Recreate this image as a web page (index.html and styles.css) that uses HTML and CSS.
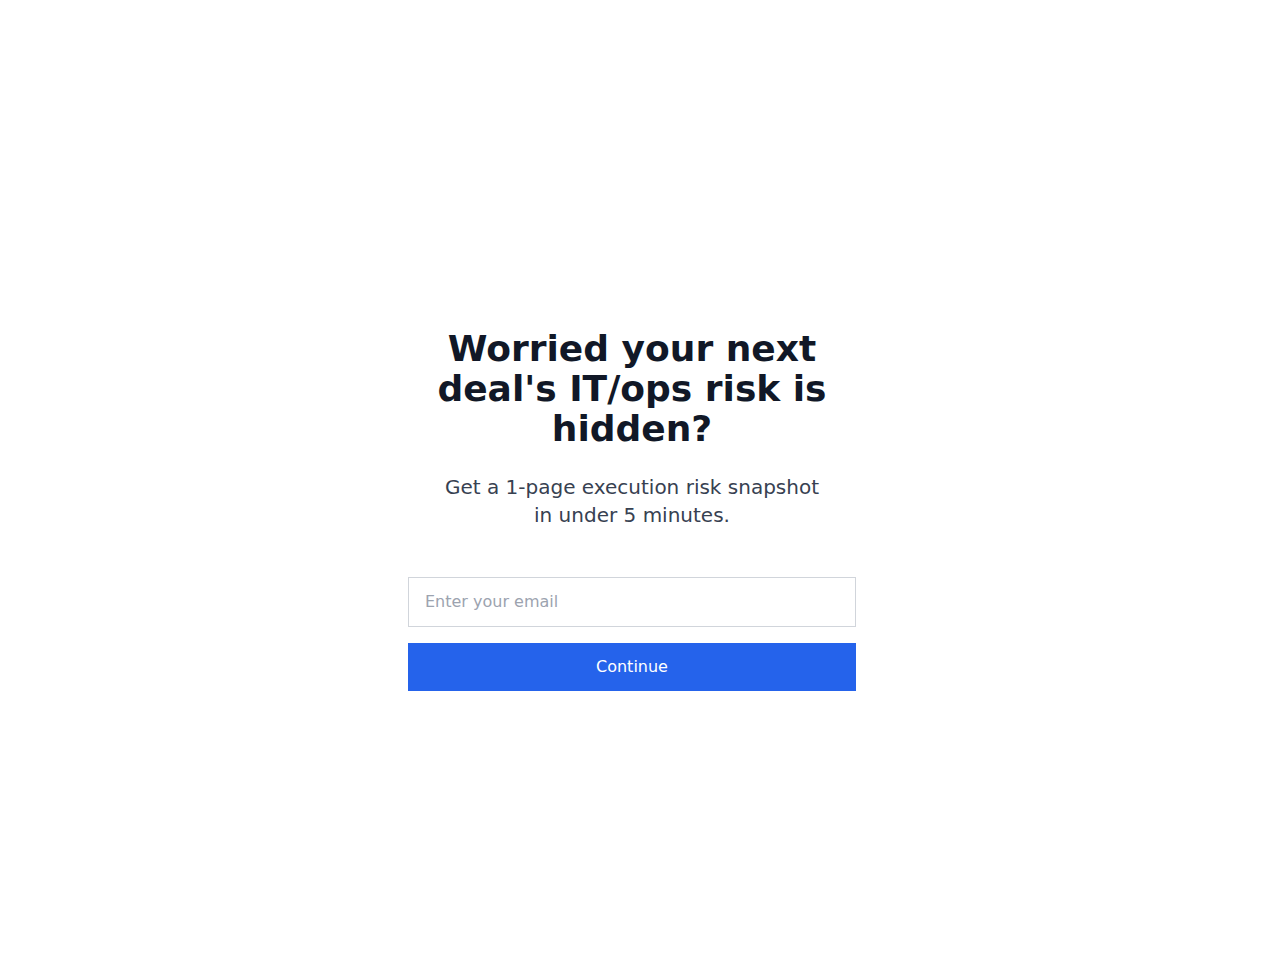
FILE: index.html
```html
<!DOCTYPE html>
<html lang="en">
<head>
<meta charset="utf-8">
<title>Execution risk snapshot</title>
<link rel="stylesheet" href="styles.css">
</head>
<body>
<main class="page">
  <section class="card">
    <h1 class="title">Worried your next deal's IT/ops risk is hidden?</h1>
    <p class="subtitle">Get a 1-page execution risk snapshot in under 5 minutes.</p>
    <form class="form">
      <input class="email" type="email" placeholder="Enter your email">
      <button class="btn" type="button">Continue</button>
    </form>
  </section>
</main>
</body>
</html>
```
FILE: styles.css
```css
* { box-sizing: border-box; }
html { overflow-y: scroll; }
html, body { margin: 0; padding: 0; background: #ffffff; }
body { font-family: "DejaVu Sans", sans-serif; }
.page {
  min-height: 100vh;
  box-sizing: content-box;
  padding: 32px 31px 32px 16px;
  display: flex;
  align-items: center;
  justify-content: center;
}
.card { width: 100%; max-width: 448px; text-align: center; }
.title {
  margin: 0 0 24px;
  font-size: 36px;
  line-height: 40px;
  font-weight: 700;
  color: #111827;
}
.subtitle {
  margin: 0 auto 48px;
  max-width: 384px;
  font-size: 20px;
  line-height: 28px;
  color: #374151;
}
.form { display: flex; flex-direction: column; gap: 16px; }
.email {
  width: 100%;
  height: 50px;
  padding: 12px 16px;
  border: 1px solid #d1d5db;
  border-radius: 0;
  font-family: "DejaVu Sans", sans-serif;
  font-size: 16px;
  line-height: 24px;
  color: #111827;
  outline: none;
}
.email::placeholder { color: #9ca3af; }
.btn {
  width: 100%;
  height: 48px;
  border: 0;
  border-radius: 0;
  background: #2563eb;
  color: #ffffff;
  font-family: "DejaVu Sans", sans-serif;
  font-size: 16px;
  line-height: 24px;
  cursor: pointer;
}
```
